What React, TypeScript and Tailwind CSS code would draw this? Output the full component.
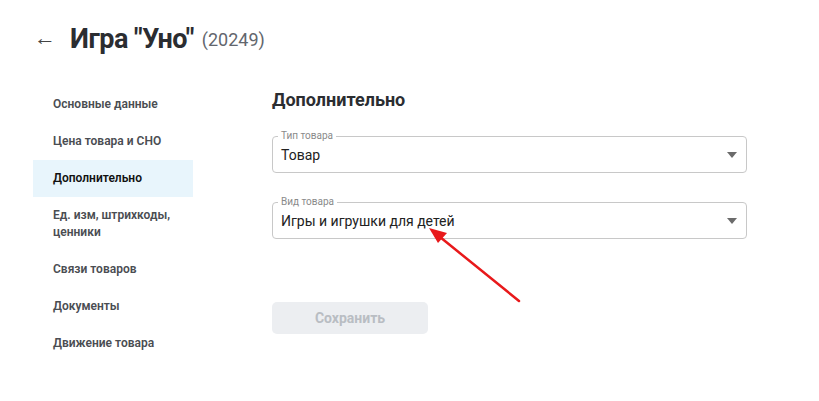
import { ReactNode } from "react";

const navItems = [
  { label: "Основные данные" },
  { label: "Цена товара и СНО" },
  { label: "Дополнительно", active: true },
  { label: "Ед. изм, штрихкоды, ценники" },
  { label: "Связи товаров" },
  { label: "Документы" },
  { label: "Движение товара" },
];

function SelectField({ label, value }: { label: string; value: string }) {
  return (
    <div className="relative h-[37px] w-[475px] rounded-[4px] border border-[#c8c8c8] flex items-center pl-[8px] pr-[8px]">
      <span className="absolute left-[5px] top-[-8px] bg-white px-[3px] text-[10px] leading-[14px] text-[#8a8a8a]">
        {label}
      </span>
      <span className="flex-1 text-[14px] text-[#222] pt-[1px]">{value}</span>
      <svg width="10" height="6" viewBox="0 0 10 6" className="mr-[1px]">
        <path d="M0 0 L10 0 L5 6 Z" fill="#6b6b6b" />
      </svg>
    </div>
  );
}

function NavItem({ children, active }: { children: ReactNode; active?: boolean }) {
  return (
    <div
      className={`pl-[20px] pr-2 py-[10px] text-[12px] leading-[17px] font-semibold ${
        active ? "bg-[#e8f5fc] text-[#111]" : "text-[#4a4d52]"
      }`}
    >
      {children}
    </div>
  );
}

export default function App() {
  return (
    <div className="relative w-[819px] h-[401px] bg-white font-['Roboto',sans-serif] overflow-hidden">
      {/* header */}
      <div className="flex items-center h-[36px] mt-[21px] pl-[34px]">
        <span className="text-[22px] leading-none text-[#444] w-[36px] -mt-[3px]">←</span>
        <h1 className="text-[27px] font-bold tracking-[-0.5px] text-[#2b2d31]">Игра "Уно"</h1>
        <span className="ml-[8px] text-[18px] text-[#62666d] mt-[1px]">(20249)</span>
      </div>

      <div className="flex mt-[29px] pl-[33px]">
        {/* sidebar */}
        <nav className="w-[160px] flex flex-col">
          {navItems.map((item) => (
            <NavItem key={item.label} active={item.active}>
              {item.label}
            </NavItem>
          ))}
        </nav>

        {/* main */}
        <div className="ml-[79px] flex flex-col pt-[2px]">
          <h2 className="text-[18px] leading-[24px] font-bold text-[#2b2d31]">Дополнительно</h2>
          <div className="mt-[24px]">
            <SelectField label="Тип товара" value="Товар" />
          </div>
          <div className="mt-[29px]">
            <SelectField label="Вид товара" value="Игры и игрушки для детей" />
          </div>
          <button className="mt-[63px] w-[156px] h-[32px] rounded-[5px] bg-[#eceef1] text-[14px] font-bold text-[#b9bdc3]">
            Сохранить
          </button>
        </div>
      </div>

      {/* annotation arrow */}
      <svg className="absolute left-0 top-0 pointer-events-none" width="819" height="401">
        <line x1="519" y1="301" x2="440" y2="237" stroke="#e8191b" strokeWidth="2.5" strokeLinecap="round" />
        <path d="M429 228 L447 233 L438 243 Z" fill="#e8191b" />
      </svg>
    </div>
  );
}
